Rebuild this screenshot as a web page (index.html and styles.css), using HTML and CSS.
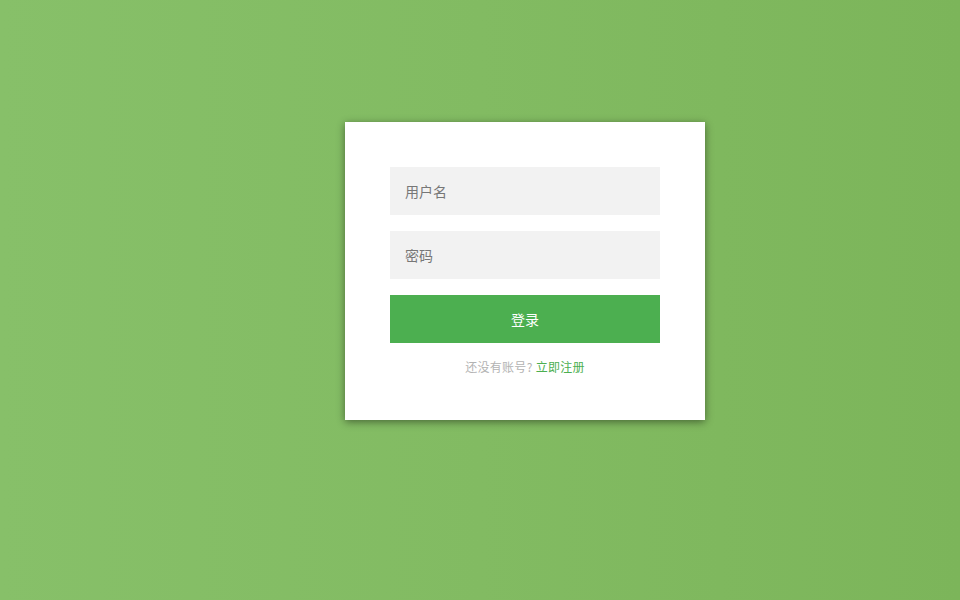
FILE: index.html
```html
<!DOCTYPE html>
<html lang="zh">
<head>
<meta charset="utf-8">
<title>登录</title>
<link rel="stylesheet" href="styles.css">
</head>
<body>
<div class="page">
  <form class="card">
    <input class="field" type="text" placeholder="用户名">
    <input class="field" type="password" placeholder="密码">
    <button class="btn" type="button">登录</button>
    <p class="tip">还没有账号? <a href="#" class="link">立即注册</a></p>
  </form>
</div>
</body>
</html>
```
FILE: styles.css
```css
html, body {
  margin: 0;
  padding: 0;
  height: 100%;
}
body {
  font-family: "Noto Sans CJK SC", "Liberation Sans", sans-serif;
  background: linear-gradient(to right, #87c069 0%, #82bb62 50%, #7cb55a 100%);
}
.page {
  height: 100%;
  display: flex;
  justify-content: center;
  padding-top: 122px;
  box-sizing: border-box;
}
.card {
  width: 360px;
  height: 298px;
  box-sizing: border-box;
  background: #fff;
  padding: 45px;
  margin-left: 90px;
  display: flex;
  flex-direction: column;
  gap: 16px;
  box-shadow: 0 2px 8px rgba(0, 0, 0, 0.45);
}
.field {
  display: block;
  width: 100%;
  height: 48px;
  box-sizing: border-box;
  border: none;
  outline: none;
  background: #f2f2f2;
  padding: 0 15px;
  font-family: inherit;
  font-size: 14px;
  color: #333;
}
.field::placeholder {
  color: #777;
}
.btn {
  display: block;
  width: 100%;
  height: 48px;
  border: none;
  background: #4caf50;
  color: #fff;
  font-family: inherit;
  font-size: 14px;
  cursor: pointer;
}
.tip {
  margin: 0;
  text-align: center;
  font-size: 12px;
  color: #b3b3b3;
  line-height: 16px;
  letter-spacing: 0.3px;
}
.link {
  color: #4caf50;
  text-decoration: none;
}
```
